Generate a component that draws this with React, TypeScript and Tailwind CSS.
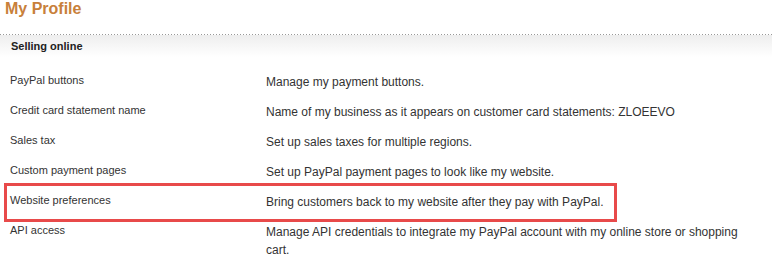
import React from 'react';

const rows = [
  { label: 'PayPal buttons', text: 'Manage my payment buttons.' },
  {
    label: 'Credit card statement name',
    text: 'Name of my business as it appears on customer card statements: ZLOEEVO',
  },
  { label: 'Sales tax', text: 'Set up sales taxes for multiple regions.' },
  { label: 'Custom payment pages', text: 'Set up PayPal payment pages to look like my website.' },
  {
    label: 'Website preferences',
    text: 'Bring customers back to my website after they pay with PayPal.',
    highlight: true,
  },
  {
    label: 'API access',
    text: 'Manage API credentials to integrate my PayPal account with my online store or shopping cart.',
  },
];

export default function App() {
  return (
    <div className="w-[772px] h-[261px] bg-white overflow-hidden font-['Liberation_Sans',Arial,sans-serif] text-[#333]">
      <h1 className="pl-[5px] text-[16px] leading-[18px] font-bold text-[#c8803a]">My Profile</h1>

      <div className="mt-[16px] h-px bg-[repeating-linear-gradient(to_right,#999_0_1px,transparent_1px_3px)]" />
      <div className="h-[22px] pl-[11px] bg-gradient-to-b from-[#eeeeee] to-white text-[11px] leading-[22px] font-bold text-[#222]">
        Selling online
      </div>

      <div className="mt-[10px]">
        {rows.map((row) => (
          <div key={row.label} className="relative flex items-start py-[6px]">
            {row.highlight && (
              <div className="absolute left-[4px] top-[-4px] w-[613px] h-[39px] border-[3px] border-[#e84a4a]" />
            )}
            <div className="w-[266px] pl-[10px] text-[11px] leading-[14px]">{row.label}</div>
            <div className="w-[488px] text-[12px] leading-[18px]">{row.text}</div>
          </div>
        ))}
      </div>
    </div>
  );
}
